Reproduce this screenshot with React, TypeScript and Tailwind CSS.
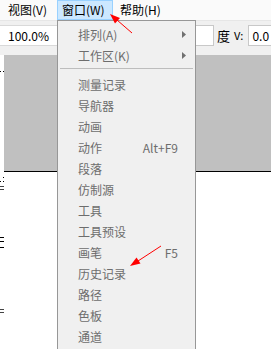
import React from "react";

const items: { label: string; shortcut?: string }[] = [
  { label: "测量记录" },
  { label: "导航器" },
  { label: "动画" },
  { label: "动作", shortcut: "Alt+F9" },
  { label: "段落" },
  { label: "仿制源" },
  { label: "工具" },
  { label: "工具预设" },
  { label: "画笔", shortcut: "F5" },
  { label: "历史记录" },
  { label: "路径" },
  { label: "色板" },
  { label: "通道" },
];

function Row({ label, shortcut, sub }: { label: string; shortcut?: string; sub?: boolean }) {
  return (
    <div className="flex h-[21px] items-center pl-[20px] pr-[9px] text-[12px] leading-[21px] text-[#6d6d6d]">
      <span className="flex-1 whitespace-nowrap">{label}</span>
      {shortcut && <span className="whitespace-nowrap">{shortcut}</span>}
      <span className="flex w-[8px] justify-end">
        {sub && (
          <svg width="4" height="7" viewBox="0 0 4 7">
            <path d="M0 0 L4 3.5 L0 7 Z" fill="#707070" />
          </svg>
        )}
      </span>
    </div>
  );
}

export default function App() {
  return (
    <div className="relative h-[349px] w-[271px] overflow-hidden bg-white font-['Noto_Sans_CJK_SC','Microsoft_YaHei',sans-serif] text-[12px] text-black">
      {/* menubar */}
      <div className="flex h-[21px] items-stretch border-b border-[#e6e6e6] bg-[#fafafa] leading-[20px]">
        <div className="w-[57px] pl-[8px] whitespace-nowrap">视图(V)</div>
        <div className="w-[56px] border border-[#99d1ff] bg-[#cce8ff] pl-[4px] leading-[18px] whitespace-nowrap">窗口(W)</div>
        <div className="pl-[7px] whitespace-nowrap">帮助(H)</div>
      </div>
      {/* toolbar */}
      <div className="flex h-[34px] items-start bg-[#f0f0f0] pt-[4px]">
        <div className="h-[21px] w-[57px] border-y border-[#d9d9d9] bg-white pl-[8px] leading-[19px]">100.0%</div>
        <div className="w-[139px]" />
        <div className="h-[21px] w-[18px] border border-l-0 border-[#c8c8c8] bg-white" />
        <div className="ml-[3px] leading-[21px] text-[13px]">度</div>
        <div className="ml-[4px] leading-[21px] text-[11px]">V:</div>
        <div className="ml-[5px] h-[21px] flex-1 border border-r-0 border-[#c8c8c8] bg-white pl-[3px] leading-[19px]">0.0</div>
      </div>
      {/* canvas area */}
      <div className="flex">
        <div className="relative h-[294px] w-[4px] bg-white">
          <div className="absolute left-0 top-[16px] h-[1px] w-[1px] bg-black" />
          <div className="absolute left-[3px] top-[16px] h-[1px] w-[1px] bg-black" />
          <div className="absolute left-[3px] top-[122px] h-[1px] w-[1px] bg-black" />
          <div className="absolute left-0 top-[126px] h-[1px] w-[1px] bg-black" />
          <div className="absolute left-[3px] top-[126px] h-[1px] w-[1px] bg-black" />
          <div className="absolute left-0 top-[131px] h-[1px] w-[4px] bg-[#444]" />
          <div className="absolute left-0 top-[134px] h-[1px] w-[4px] bg-[#444]" />
          <div className="absolute left-0 top-[182px] h-[1px] w-[4px] bg-black" />
          <div className="absolute left-0 top-[186px] h-[1px] w-[4px] bg-black" />
          <div className="absolute left-0 top-[192px] h-[1px] w-[4px] bg-black" />
          <div className="absolute left-0 top-[254px] h-[1px] w-[4px] bg-[#444]" />
          <div className="absolute left-0 top-[257px] h-[1px] w-[4px] bg-[#444]" />
        </div>
        <div className="flex-1">
          <div className="h-[117px] border-b border-black bg-[#c0c0c0]" />
        </div>
      </div>

      {/* dropdown menu */}
      <div className="absolute left-[57px] top-[20px] bottom-0 w-[139px] border border-b-0 border-[#979797] bg-[#f0f0f0] pt-[3px]">
        <Row label="排列(A)" sub />
        <Row label="工作区(K)" sub />
        <div className="pb-[5px] pl-[2px] pr-[2px] pt-[2px]">
          <div className="h-[1px] bg-[#bdbdbd]" />
        </div>
        {items.map((it) => (
          <Row key={it.label} label={it.label} shortcut={it.shortcut} />
        ))}
      </div>

      {/* red arrows */}
      <svg className="pointer-events-none absolute left-0 top-0" width="271" height="349" viewBox="0 0 271 349">
        <line x1="132" y1="33" x2="117" y2="20" stroke="#ff0000" strokeWidth="1" />
        <polygon points="110,14 120,18 115,23.5" fill="#ff0000" />
        <line x1="161" y1="246" x2="138" y2="261" stroke="#ff0000" strokeWidth="1" />
        <polygon points="130,266 136.5,257.5 140.5,263.5" fill="#ff0000" />
      </svg>
    </div>
  );
}
